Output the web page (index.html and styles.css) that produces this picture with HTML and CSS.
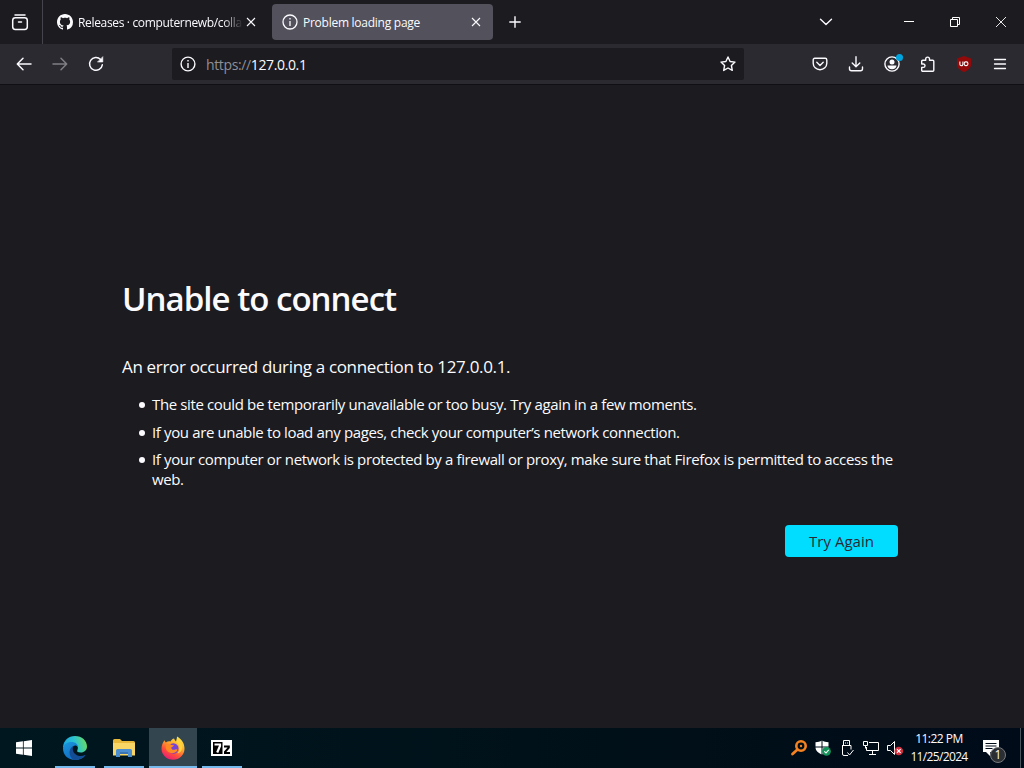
FILE: index.html
```html
<!DOCTYPE html>
<html lang="en">
<head>
  <meta charset="UTF-8">
  <title>Problem loading page</title>
  <link rel="stylesheet" href="styles.css">
</head>
<body>
  <div class="tabs-bar">
    <div class="view-button">
      <svg width="18" height="18" viewBox="0 0 18 18" fill="none" stroke="#fbfbfe" stroke-width="1.5" stroke-linecap="round">
        <path d="M4 2h10"/>
        <rect x="1.7" y="4.8" width="14.6" height="11.6" rx="2.6"/>
        <path d="M7.500 9h3"/>
      </svg>
    </div>
    <div class="tab">
      <svg class="tab-icon" width="16" height="16" viewBox="0 0 16 16" fill="#fbfbfe">
        <path d="M8 0C3.58 0 0 3.58 0 8c0 3.54 2.29 6.53 5.47 7.59.4.07.55-.17.55-.38 0-.19-.01-.82-.01-1.49-2.01.37-2.53-.49-2.69-.94-.09-.23-.48-.94-.82-1.13-.28-.15-.68-.52-.01-.53.63-.01 1.08.58 1.23.82.72 1.21 1.87.87 2.33.66.07-.52.28-.87.51-1.07-1.78-.2-3.64-.89-3.64-3.95 0-.87.31-1.59.82-2.15-.08-.2-.36-1.02.08-2.12 0 0 .67-.21 2.2.82.64-.18 1.32-.27 2-.27s1.36.09 2 .27c1.53-1.04 2.2-.82 2.2-.82.44 1.1.16 1.92.08 2.12.51.56.82 1.27.82 2.15 0 3.07-1.87 3.75-3.65 3.95.29.25.54.73.54 1.48 0 1.07-.01 1.93-.01 2.2 0 .21.15.46.55.38A8.01 8.01 0 0 0 16 8c0-4.42-3.58-8-8-8z"/>
      </svg>
      <span class="tab-label fade">Releases · computernewb/colla</span>
      <svg class="tab-close" width="10" height="10" viewBox="0 0 10 10" stroke="#fbfbfe" stroke-width="1.1"><path d="M1 1l8 8M9 1L1 9"/></svg>
    </div>
    <div class="tab selected">
      <svg class="tab-icon" width="16" height="16" viewBox="0 0 16 16" fill="none" stroke="#fbfbfe" stroke-width="1.3">
        <circle cx="8" cy="8" r="7"/>
        <path d="M8 7v5M8 4v1.6"/>
      </svg>
      <span class="tab-label">Problem loading page</span>
      <svg class="tab-close" width="10" height="10" viewBox="0 0 10 10" stroke="#fbfbfe" stroke-width="1.1"><path d="M1 1l8 8M9 1L1 9"/></svg>
    </div>
    <div class="new-tab">
      <svg width="12" height="12" viewBox="0 0 12 12" stroke="#fbfbfe" stroke-width="1.4"><path d="M6 .3v11.4M.3 6h11.4"/></svg>
    </div>
    <div class="all-tabs">
      <svg width="14" height="8" viewBox="0 0 14 8" fill="none" stroke="#fbfbfe" stroke-width="1.4" stroke-linecap="round" stroke-linejoin="round"><path d="M1.500 1.200L7 6.500l5.500-5.300"/></svg>
    </div>
    <div class="win-button">
      <svg width="10" height="10" viewBox="0 0 10 10" stroke="#fff"><path d="M0 4.500h10"/></svg>
    </div>
    <div class="win-button">
      <svg width="10" height="10" viewBox="0 0 10 10" fill="none" stroke="#fff"><path d="M.5 2.500h7v7h-7zM2.500 2.500v-2h7v7h-2"/></svg>
    </div>
    <div class="win-button">
      <svg width="12" height="12" viewBox="0 0 12 12" stroke="#fff" stroke-width=".9"><path d="M1 1l10 10M11 1L1 11"/></svg>
    </div>
  </div>

  <div class="nav-bar">
    <div class="tool">
      <svg width="16" height="16" viewBox="0 0 16 16" fill="none" stroke="#fbfbfe" stroke-width="1.5" stroke-linecap="round" stroke-linejoin="round"><path d="M15 8H1.500M7 2.300L1.300 8 7 13.700"/></svg>
    </div>
    <div class="tool disabled">
      <svg width="16" height="16" viewBox="0 0 16 16" fill="none" stroke="#fbfbfe" stroke-width="1.5" stroke-linecap="round" stroke-linejoin="round"><path d="M1 8h13.500M9 2.300L14.700 8 9 13.700"/></svg>
    </div>
    <div class="tool">
      <svg width="16" height="16" viewBox="0 0 16 16" fill="none" stroke="#fbfbfe" stroke-width="1.5" stroke-linecap="round"><path d="M14.300 8.800A6.400 6.400 0 1 1 12.600 3.500"/><path d="M14.800 1v5h-5z" fill="#fbfbfe" stroke-width=".6" stroke-linejoin="round"/></svg>
    </div>
    <div class="urlbar">
      <svg width="16" height="16" viewBox="0 0 16 16" fill="none" stroke="#fbfbfe" stroke-width="1.4">
        <circle cx="8" cy="8" r="6.900"/>
        <path d="M8 7v5M8 4v1.600"/>
      </svg>
      <span class="url"><span class="scheme">https://</span>127.0.0.1</span>
      <svg width="16" height="16" viewBox="0 0 16 16" fill="none" stroke="#fbfbfe" stroke-width="1.400" stroke-linejoin="round"><path d="M8 1l2.100 4.500 4.900.6-3.600 3.400.9 4.900L8 12l-4.300 2.400.9-4.900L1 6.100l4.900-.6z"/></svg>
    </div>
    <div class="tool">
      <svg width="16" height="16" viewBox="0 0 16 16" fill="none" stroke="#fbfbfe" stroke-width="1.400" stroke-linecap="round" stroke-linejoin="round"><path d="M2.800 2.300h10.400a1.600 1.600 0 0 1 1.600 1.600v3.300a6.800 6.600 0 0 1-13.600 0V3.900a1.600 1.600 0 0 1 1.600-1.600z"/><path d="M4.800 6.300L8 9.400l3.200-3.100"/></svg>
    </div>
    <div class="tool">
      <svg width="16" height="16" viewBox="0 0 16 16" fill="none" stroke="#fbfbfe" stroke-width="1.400" stroke-linecap="round" stroke-linejoin="round"><path d="M8 .8v9.700M4.200 7L8 10.800 11.800 7M1.500 11v1.700a2 2 0 0 0 2 2h9a2 2 0 0 0 2-2V11"/></svg>
    </div>
    <div class="tool account">
      <svg width="16" height="16" viewBox="0 0 16 16" fill="none" stroke="#fbfbfe" stroke-width="1.400"><circle cx="8" cy="8" r="7.100"/><circle cx="8" cy="6.100" r="2.500" fill="#fbfbfe" stroke="none"/><path d="M3.500 9.500h9c0 2.300-2 3.800-4.500 3.800s-4.500-1.500-4.500-3.800z" fill="#fbfbfe" stroke="none"/></svg>
      <span class="badge"></span>
    </div>
    <div class="tool">
      <svg width="16" height="16" viewBox="0 0 16 16" fill="none" stroke="#fbfbfe" stroke-width="1.400" stroke-linejoin="round"><path d="M5.700 4.300V3a1.900 1.900 0 0 1 3.800 0v1.300h3.300a1 1 0 0 1 1 1v9a1 1 0 0 1-1 1H2.700a1 1 0 0 1-1-1v-2.900h1.600a1.700 1.700 0 0 0 0-3.400H1.700V5.300a1 1 0 0 1 1-1z"/></svg>
    </div>
    <div class="tool">
      <svg width="18" height="18" viewBox="0 0 18 18"><path d="M9 1l7 2.500v5.900c0 3.600-3 5.800-7 7.600-4-1.800-7-4-7-7.600V3.500z" fill="#920a0a"/><path d="M4.900 6.500v2.700a1.500 1.500 0 0 0 3 0V6.500" fill="none" stroke="#fff" stroke-width="1.100"/><rect x="9.200" y="6.900" width="3.700" height="3.700" rx="1.500" fill="none" stroke="#fff" stroke-width="1.100"/></svg>
    </div>
    <div class="tool">
      <svg width="14" height="12" viewBox="0 0 14 12" stroke="#fbfbfe" stroke-width="1.300" stroke-linecap="round"><path d="M1.500 1.500h11M1.500 6h11M1.500 10.500h11"/></svg>
    </div>
  </div>

  <div class="content">
    <div class="container">
      <h1>Unable to connect</h1>
      <p class="short-desc">An error occurred during a connection to 127.0.0.1.</p>
      <ul>
        <li>The site could be temporarily unavailable or too busy. Try again in a few moments.</li>
        <li>If you are unable to load any pages, check your computer’s network connection.</li>
        <li>If your computer or network is protected by a firewall or proxy, make sure that Firefox is permitted to access the web.</li>
      </ul>
      <button class="try-again">Try Again</button>
    </div>
  </div>

  <div class="taskbar">
    <div class="start">
      <svg width="16" height="16" viewBox="0 0 16 16" fill="#fff"><path d="M0 2.300l6.900-1v6.300H0zM7.700 1.200L16 0v7.600H7.700zM0 8.400h6.900v6.300l-6.900-1zM7.700 8.400H16V16l-8.300-1.200z"/></svg>
    </div>
    <div class="app">
      <svg width="26" height="26" viewBox="0 0 26 26">
        <defs>
          <linearGradient id="edge-a" x1="0" y1=".5" x2="1" y2=".3"><stop offset="0" stop-color="#1ba4df"/><stop offset=".5" stop-color="#2bc3d2"/><stop offset="1" stop-color="#6bdc5d"/></linearGradient>
          <linearGradient id="edge-b" x1="0" y1="0" x2=".6" y2="1"><stop offset="0" stop-color="#1a97dd"/><stop offset="1" stop-color="#1368bf"/></linearGradient>
        </defs>
        <path d="M1 12C1.500 5.500 6.500 1 13 1c7 0 12 4.800 12 10.500 0 3.600-2.700 6-6.200 6-2.700 0-4.200-1-3.500-2.300C17 12 15 8.500 10.500 8.500 6 8.500 2 10 1 14z" fill="url(#edge-a)"/>
        <path d="M1 13.500C1.500 9.500 5 7 9.500 7c4 0 6.500 2.300 6.500 5-1-1.500-3-2-4.500-1-4 3-2 9 3 10.500 3 1 6.500.2 9-1.500C21.500 23.300 17.500 25 13 25 6 25 1 20 1 13.500z" fill="url(#edge-b)"/>
        <path d="M11.500 11c-5 2-5.500 10 0 13.900 5 .6 10-1.900 12-5.100-5 2.700-11 .8-12.500-4-.4-1.800-.2-3.500.5-4.800z" fill="#124d96"/>
      </svg>
    </div>
    <div class="app">
      <svg width="24" height="20" viewBox="0 0 24 20">
        <path d="M1 2.500A1.500 1.500 0 0 1 2.500 1H8l2 2h11.500A1.500 1.500 0 0 1 23 4.500V8H1z" fill="#e8b93a"/>
        <path d="M1 5h22v12.500H1z" fill="#f8d767"/>
        <path d="M4 12.500A1.500 1.500 0 0 1 5.500 11h13a1.500 1.500 0 0 1 1.500 1.500V19h-4v-3H8v3H4z" fill="#4c8fd0"/>
        <path d="M8 14h8v2H8z" fill="#3b74b0"/>
      </svg>
    </div>
    <div class="app active">
      <svg width="24" height="24" viewBox="0 0 24 24">
        <defs>
          <linearGradient id="ff-a" x1=".8" y1="0" x2=".25" y2="1"><stop offset="0" stop-color="#fff04b"/><stop offset=".4" stop-color="#ffa32b"/><stop offset=".7" stop-color="#ff4b3e"/><stop offset="1" stop-color="#e5197a"/></linearGradient>
        </defs>
        <path d="M3.500 4.300c.3 1 .7 1.700 1.300 2.300C6.200 5.500 8 5.100 9.500 5.500 10.500 3.500 12 2.800 13 2.600c.5 1.400 1.400 2.500 2.600 3.300L16 .5c4.500 2.300 7.500 7 7.500 12A11.500 11.300 0 0 1 .5 12.500C.5 9.500 1.800 6.500 3.500 4.300z" fill="url(#ff-a)"/>
        <circle cx="12.300" cy="12.500" r="5.200" fill="#7542d8"/>
        <path d="M5 9c2-1.500 4-1.300 5.500 0l2.500.2c0 1-2 1.600-2.700 2.300 0 2 1.700 3 4.200 1.900 1-.4 1.900-.2 2.100.5-1.800 3.200-6.200 4.400-9.200 2.200C5 14.500 4.200 11.500 5 9z" fill="#ff8a24"/>
        <path d="M15 6c4 2.500 4.500 8 1.500 11.500 4-1 5.500-5 4.500-9L16 2z" fill="#ffd33c"/>
      </svg>
    </div>
    <div class="app">
      <svg width="22" height="18" viewBox="0 0 22 18">
        <rect x="0" y="1" width="21" height="16" fill="#fff"/>
        <rect x="2" y="3" width="9.500" height="12" fill="#000"/>
        <path d="M3.500 5.500h5.500v1.500L6.200 13.500" fill="none" stroke="#fff" stroke-width="2.200"/>
        <path d="M13 7.500h4.800v1.200L14 13v1h5" fill="none" stroke="#000" stroke-width="2"/>
      </svg>
    </div>
    <div class="tray">
      <div class="tray-icon">
        <svg width="18" height="18" viewBox="0 0 18 18" fill="none" stroke="#f58220" stroke-linecap="round"><circle cx="11" cy="7" r="4.700" stroke-width="2.600"/><circle cx="11" cy="7" r="1.200" fill="#f58220" stroke="none"/><path d="M7.200 10.800L2.500 15" stroke-width="2.800"/></svg>
      </div>
      <div class="tray-icon">
        <svg width="16" height="16" viewBox="0 0 16 16"><path d="M7 .5c2 1.300 4 1.700 6.500 1.700V7c0 4-3 6-6.500 7.500C3.500 13 .5 11 .5 7V2.200C3 2.200 5 1.800 7 .5z" fill="#fff"/><path d="M7 0v15M0 7h14" stroke="#000d19"/><circle cx="11.500" cy="11.300" r="4.400" fill="#14935a"/><path d="M9.300 11.300l1.700 1.700 2.700-3.200" fill="none" stroke="#fff" stroke-width="1.100"/></svg>
      </div>
      <div class="tray-icon">
        <svg width="16" height="18" viewBox="0 0 16 18" fill="none" stroke="#fff"><path d="M4.500 6V1.500h6V6M3 6.500h9v4M3.500 6.500v8.500a1.500 1.500 0 0 0 1.500 1.500H9"/><path d="M6 4h1M8 4h1M8.500 13.500l2 2.500 4-5"/></svg>
      </div>
      <div class="tray-icon">
        <svg width="18" height="16" viewBox="0 0 18 16" fill="none" stroke="#fff"><path d="M7 2.500h9.500v8h-12V7M10.500 10.500v3.500M7 14.500h7"/><path d="M1.500 1.500h4v4h-4zM3.500 5.500v3"/></svg>
      </div>
      <div class="tray-icon">
        <svg width="18" height="16" viewBox="0 0 18 16"><path d="M1.500 5.500h3L8.500 1.500v13L4.500 10.500h-3z" fill="none" stroke="#fff"/><circle cx="12.800" cy="11" r="4.300" fill="#d3313f"/><path d="M11 9.200l3.600 3.600M14.600 9.200L11 12.800" stroke="#fff" stroke-width="1.200"/></svg>
      </div>
      <div class="clock">
        <span>11:22 PM</span>
        <span class="date">11/25/2024</span>
      </div>
      <div class="notifications">
        <svg width="18" height="18" viewBox="0 0 18 18"><path d="M1 1h16v12H8v4l-4-4H1z" fill="#fff"/><path d="M3.500 4.500h11M3.500 7h11M3.500 9.500h7" stroke="#000d19"/></svg>
        <span class="count">1</span>
      </div>
    </div>
  </div>
</body>
</html>
```

FILE: styles.css
```css
* {
  box-sizing: border-box;
}

body {
  margin: 0;
  width: 1024px;
  height: 768px;
  overflow: hidden;
  display: flex;
  flex-direction: column;
  background: #1c1b20;
  color: #fbfbfe;
  font-family: "Open Sans", "Noto Sans", sans-serif;
}

svg {
  display: block;
  flex: none;
}

/* tabs */
.tabs-bar {
  display: flex;
  align-items: center;
  height: 44px;
  background: #1c1b20;
}

.view-button {
  width: 43px;
  height: 44px;
  padding-left: 11px;
  display: flex;
  align-items: center;
  border-right: 1px solid #45444c;
}

.tab {
  width: 221px;
  height: 36px;
  margin-left: 4px;
  padding: 0 12px 0 10px;
  display: flex;
  align-items: center;
  border-radius: 4px;
  font-size: 12px;
}

.tab.selected {
  margin-left: 4px;
  background: #53515c;
}

.tab-label {
  flex: 1;
  margin-left: 5px;
  white-space: nowrap;
  letter-spacing: -0.26px;
}

.tab-label.fade {
  letter-spacing: -0.34px;
  -webkit-mask-image: linear-gradient(to left, transparent, #000 20px);
  mask-image: linear-gradient(to left, transparent, #000 20px);
}

.tab-close {
  margin-left: 3px;
}

.new-tab {
  width: 36px;
  margin-left: 4px;
  display: flex;
  justify-content: center;
}

.all-tabs {
  width: 36px;
  margin-left: auto;
  margin-right: 42px;
  display: flex;
  justify-content: center;
}

.win-button {
  width: 46px;
  display: flex;
  justify-content: center;
}

/* toolbar */
.nav-bar {
  display: flex;
  align-items: center;
  height: 41px;
  padding: 0 6px;
  background: #2b2a31;
  border-bottom: 1px solid #0f0f14;
}

.tool {
  position: relative;
  width: 36px;
  display: flex;
  justify-content: center;
}

.tool.disabled {
  opacity: 0.4;
}

.urlbar {
  width: 572px;
  height: 32px;
  margin-left: 58px;
  margin-right: auto;
  padding: 0 8px;
  display: flex;
  align-items: center;
  background: #1c1b20;
  border-radius: 2px;
}

.url {
  flex: 1;
  margin-left: 10px;
  font-size: 14px;
  letter-spacing: -0.37px;
}

.scheme {
  color: #8f8f96;
}

.badge {
  position: absolute;
  top: -2px;
  right: 7px;
  width: 7px;
  height: 7px;
  border-radius: 50%;
  background: #00a5e0;
}

/* error page */
.content {
  flex: 1;
  padding: 192px 126px 0 122px;
}

.container {
  display: flex;
  flex-direction: column;
}

h1 {
  margin: 0;
  font-size: 33px;
  font-weight: 600;
  line-height: 44px;
  letter-spacing: -0.97px;
}

.short-desc {
  margin: 34px 0 0;
  font-size: 17px;
  line-height: 24px;
  letter-spacing: -0.33px;
}

ul {
  margin: 15px 0 0;
  padding-left: 30px;
  list-style: none;
  font-size: 15px;
  line-height: 20px;
  letter-spacing: -0.37px;
}

li {
  margin-bottom: 7.5px;
}

li:last-child {
  margin-bottom: 0;
}

li::before {
  content: "";
  display: inline-block;
  width: 6px;
  height: 6px;
  margin: 0 7px 2px -13px;
  border-radius: 50%;
  background: #fbfbfe;
}

.try-again {
  align-self: flex-end;
  width: 113px;
  height: 32px;
  margin-top: 36px;
  padding: 0;
  border: 0;
  border-radius: 4px;
  background: #00ddff;
  color: #2b2a33;
  font: 500 15px "Open Sans", "Noto Sans", sans-serif;
}

/* windows taskbar */
.taskbar {
  display: flex;
  height: 40px;
  background: linear-gradient(to right, #001720, #001018 60%, #000b19);
}

.start {
  width: 48px;
  margin-right: 3px;
  display: flex;
  align-items: center;
  justify-content: center;
}

.app {
  width: 48px;
  margin-right: 1px;
  display: flex;
  align-items: center;
  justify-content: center;
  background: linear-gradient(#76b9ed, #76b9ed) center bottom / 40px 2px no-repeat;
}

.app.active {
  background-color: #33464f;
  background-size: 48px 2px;
}

.tray {
  display: flex;
  align-items: center;
  margin-left: auto;
  padding-right: 3px;
}

.tray-icon {
  width: 24px;
  display: flex;
  justify-content: center;
}

.clock {
  width: 64px;
  display: flex;
  flex-direction: column;
  align-items: center;
  font-size: 12px;
  line-height: 18px;
  letter-spacing: -0.5px;
}

.date {
  letter-spacing: -0.65px;
}

.notifications {
  position: relative;
  width: 50px;
  height: 40px;
  padding: 11px 0 0 11px;
  border-right: 1px solid #4a545c;
}

.count {
  position: absolute;
  left: 19px;
  top: 19px;
  width: 16px;
  height: 16px;
  border: 1px solid #77797c;
  border-radius: 50%;
  background: #2b2f33;
  font-size: 12px;
  line-height: 14px;
  text-align: center;
}
```
